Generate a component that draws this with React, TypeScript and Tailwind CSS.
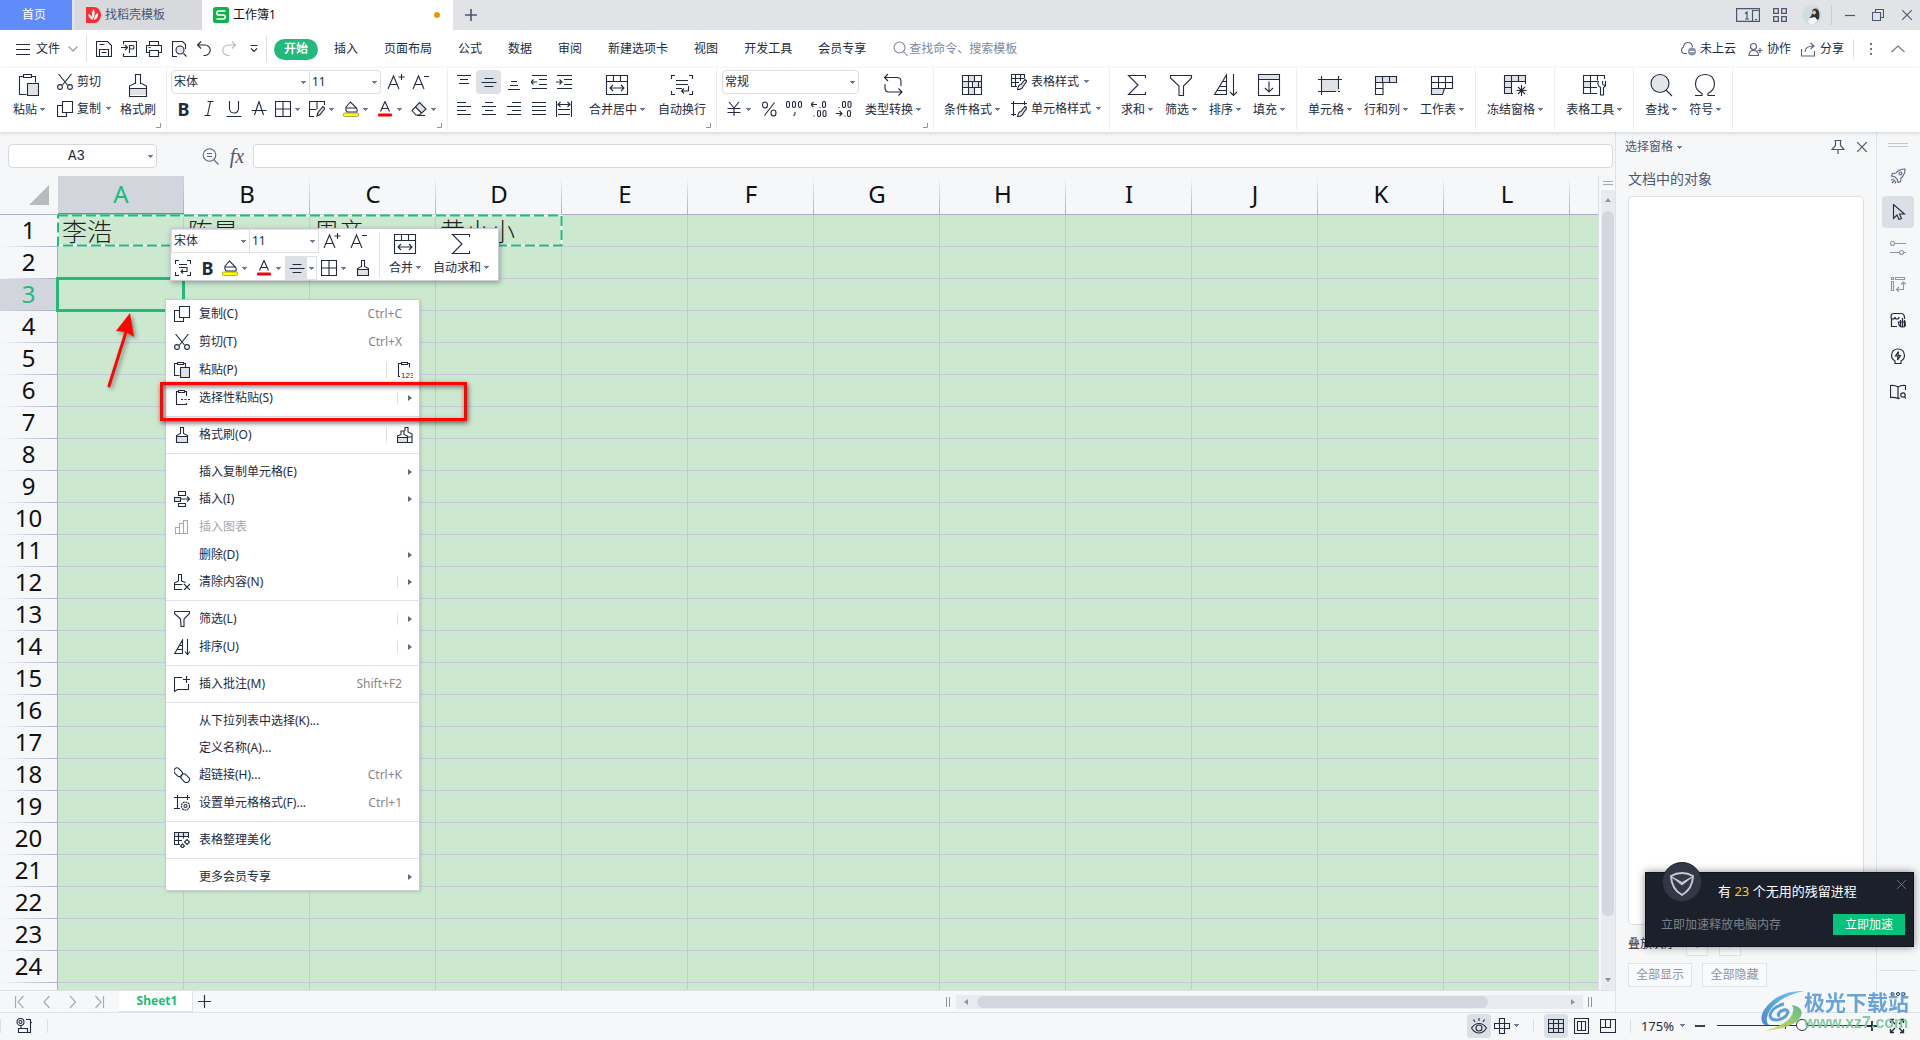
import React from "react";

type IconProps = { s?: number; d?: string; f?: string; sw?: number; className?: string; children?: React.ReactNode };

function Ic({ s = 16, d, f, sw = 1.1, className = "", children }: IconProps) {
  return (
    <svg width={s} height={s} viewBox={`0 0 ${s} ${s}`} fill="none" stroke="currentColor" strokeWidth={sw} className={`shrink-0 ${className}`} aria-hidden="true">
      {f && <path d={f} fill="#dfe1e4" stroke="none" />}
      {d && <path d={d} />}
      {children}
    </svg>
  );
}

const Caret = ({ className = "" }: { className?: string }) => (
  <svg width="5" height="3" viewBox="0 0 5 3" className={`shrink-0 ${className}`} fill="#707a90" aria-hidden="true">
    <path d="M0 0h5v1H0zM1 1h3v1H1zM2 2h1v1H2z" />
  </svg>
);

const Arrow = () => (
  <svg width="4" height="6" viewBox="0 0 4 6" fill="#5f6b85" aria-hidden="true">
    <path d="M0 0v6l4-3z" />
  </svg>
);

/* ---------- shared icons ---------- */
const CopyI = () => <Ic d="M5.5.5h10v11h-10zM5.500 4.500h-5v11h9v-4" />;
const CutI = () => (
  <Ic d="M1.500 0l9 11M14.500 0l-9 11">
    <circle cx="3" cy="13" r="2.400" />
    <circle cx="13" cy="13" r="2.400" />
  </Ic>
);
const PasteSmall = () => <Ic f="M7 6h8v9H7z" d="M5.500 13.500h-5v-12h3M9.500 1.500h2v4M3.500.5h6v2h-6zM6.500 5.500h9v10h-9z" />;
const BrushSmall = () => <Ic f="M3 10h11v5H3z" d="M2.500 15.500v-7l4-2v-6h3v6l4 2v7zM2.500 9.500h11" />;
const FunnelSmall = () => <Ic d="M.5.5h15v2l-5.500 5.500v7.500H7L6.500 8 .5 2.500z" />;
const SortSmall = () => <Ic d="M.7 14.500L8.500 1v13.500zM5.500 6.500h3M3 10.500h5.500M13.500 0v15M11 12.500l2.500 3 2.500-3" />;
const WrapSmall = () => <Ic d="M.5 4V.5H4M12 .5h3.500V4M.5 12v3.500H4M12 15.500h3.500V12M4 4.500h8M4 7.500h8v4H6M8 9.500l-2 2 2 2" />;
const BorderI = () => <Ic d="M.5.5h15v15H.5zM8 .5v15M.5 8h15" />;
const AlignMid = () => <Ic d="M3.500 4.500h9M.5 8.500h15M3.500 12.500h9" />;
const FillI = () => (
  <Ic d="M3 6l4.500-5 6 6c1 2 1 3 .5 4H4c-1.500-1.500-1.500-3-1-5zM3 7h10.500">
    <rect x="0.500" y="12" width="15" height="3.500" fill="#ff0" stroke="#7a7a2a" strokeWidth="0.600" rx="1" />
  </Ic>
);
const FontColorI = () => (
  <Ic d="M3.500 10.500L8 .5l4.500 10M5 7.500h6">
    <rect x="1" y="12.500" width="14" height="3" fill="#f00" stroke="none" rx="1" />
  </Ic>
);
const MergeBig = () => <Ic s={24} d="M1.500 2.500h21v19h-21zM1.500 8.500h21M8.500 2.500v6M15.500 2.500v6M5 15h14M8 12l-3 3 3 3M16 12l3 3-3 3" />;
const SigmaBig = () => <Ic s={24} d="M20.500 5V2.500h-17L13 12l-9.500 9.500h17V19" />;
const FontUp = () => <Ic s={18} d="M1 16L6.500 3 12 16M3 11.500h7M14.500 1v6M11.500 4h6" />;
const FontDown = () => <Ic s={18} d="M1 16L6.500 3 12 16M3 11.500h7M12 3.500h5" />;

/* ---------- ribbon parts ---------- */
function Big({ icon, label, caret = true }: { icon: React.ReactNode; label: string; caret?: boolean }) {
  return (
    <button className="flex shrink-0 flex-col items-center pt-[5px] text-xs leading-4">
      <span className="flex h-6 items-center">{icon}</span>
      <span className="mt-[5px] flex items-center gap-[3px] whitespace-nowrap">
        {label}
        {caret && <Caret className="mb-[2px]" />}
      </span>
    </button>
  );
}

function Small({ icon, label, caret }: { icon: React.ReactNode; label: string; caret?: boolean }) {
  return (
    <button className="flex h-[27px] items-center gap-1 whitespace-nowrap text-xs">
      {icon}
      {label}
      {caret && <Caret className="ml-px" />}
    </button>
  );
}

function Group({ children, className = "", launcher }: { children: React.ReactNode; className?: string; launcher?: boolean }) {
  return (
    <div className={`relative flex h-[62px] shrink-0 border-r border-[#eceef0] ${className}`}>
      {children}
      {launcher && (
        <svg width="5" height="5" className="absolute right-[5px] bottom-[2px]" fill="none" stroke="#8b94ab" aria-hidden="true">
          <path d="M4.500 0v4.500H0" />
        </svg>
      )}
    </div>
  );
}

const Tool = ({ label, children, active }: { label: string; children: React.ReactNode; active?: boolean }) => (
  <button aria-label={label} className={`flex h-6 w-[25px] items-center justify-center rounded-sm ${active ? "bg-[#dde1e6]" : ""}`}>
    {children}
  </button>
);

const Split = ({ label, children }: { label: string; children: React.ReactNode }) => (
  <button aria-label={label} className="flex h-6 w-[34px] items-center gap-1 pl-1">
    {children}
    <Caret />
  </button>
);

function Drop({ label, value, className = "" }: { label: string; value: string; className?: string }) {
  return (
    <label className={`relative flex h-6 items-center border border-[#dcdee2] bg-white ${className}`}>
      <select aria-label={label} className="h-full w-full appearance-none bg-transparent px-[2px] text-xs outline-none">
        <option>{value}</option>
      </select>
      <Caret className="absolute right-[3px]" />
    </label>
  );
}

const lines = (l: [number, number, number][]) => l.map(([x, y, w]) => `M${x} ${y}h${w}`).join("");

const tabs = ["插入", "页面布局", "公式", "数据", "审阅", "新建选项卡", "视图", "开发工具", "会员专享"];

function TitleBar() {
  return (
    <header className="flex h-[30px] shrink-0 items-center bg-[#e1e3e7] text-xs text-[#4c5672]">
      <button className="h-full w-[72px] bg-[#5f8bfb] pr-1 text-white">首页</button>
      <button className="ml-[3px] flex h-full w-[127px] items-center gap-1 bg-[#d8d9dd] pl-[11px]">
        <svg width="15" height="16" viewBox="0 0 15 16" aria-hidden="true">
          <path d="M0 0h8a7 8 0 010 16H0z" fill="#fb2c36" />
          <path d="M7 13C3 11 2 9 2.500 7 5 8 6 9 7 13zM7 12C5 7 6 4 8 2c1 4 1 7-1 10zM8 13c0-4 2-6 4-7 0 4-1 6-4 7z" fill="#fff" />
        </svg>
        找稻壳模板
      </button>
      <button className="flex h-full w-[251px] items-center gap-1 bg-white pl-[11px] text-[#111]">
        <svg width="16" height="16" viewBox="0 0 16 16" fill="none" aria-hidden="true">
          <rect width="16" height="16" rx="2.500" fill="#12b24b" />
          <path d="M12.500 4H5.500Q3.800 4 3.800 6T5.500 8h5Q12.200 8 12.200 10T10.500 12h-7" stroke="#fff" strokeWidth="1.600" />
        </svg>
        工作簿1
        <span className="mr-[13px] ml-auto size-[6px] rounded-full bg-[#e99b06]" />
      </button>
      <button aria-label="新建标签" className="ml-3">
        <Ic s={12} sw={1.600} d="M6 0v12M0 6h12" />
      </button>
      <div className="ml-auto flex items-center pr-2">
        <button aria-label="窗口">
          <svg width="24" height="14" viewBox="0 0 24 14" fill="none" stroke="currentColor" strokeWidth="1.200" aria-hidden="true">
            <path d="M.6.6h22.800v12.800H.6zM16.500 13V2.500h6M19 11.500h2M9 5.500l2-1.500v7M9 11h4" />
          </svg>
        </button>
        <button aria-label="应用" className="ml-[13px]">
          <Ic s={14} sw={1.300} d="M.7.7h4.600v4.600H.7zM8.700.7h4.600v4.600H8.700zM.7 8.700h4.600v4.600H.7zM8.700 8.700h4.600v4.600H8.700z" />
        </button>
        <button aria-label="账户" className="ml-[15px]">
          <svg width="20" height="20" viewBox="0 0 20 20" aria-hidden="true">
            <circle cx="10" cy="10" r="10" fill="#cfdde1" />
            <path d="M10 7c0-4 6-5 7 0 1 4 0 7-1 8l-3-2-6 0c2-1 3-3 3-6z" fill="#352f38" />
            <circle cx="12" cy="7.500" r="2" fill="#e8bda9" />
            <path d="M8 13l5-1 2 3-3 4.500-4 0-2-3z" fill="#f2f5f6" />
            <path d="M13 4l2-1.500 1 2z" fill="#d9a948" />
          </svg>
        </button>
        <span className="ml-[9px] h-5 w-px bg-[#c9ccd2]" />
        <button aria-label="最小化" className="ml-[13px]"><Ic s={10} sw={1.200} d="M0 5.500h10" /></button>
        <button aria-label="还原" className="ml-[17px]"><Ic s={12} d="M.5 3.500h8v8h-8zM3.500 3.500v-3h8v8h-3" /></button>
        <button aria-label="关闭" className="ml-[18px]"><Ic s={10} d="M0 0l10 10M10 0L0 10" /></button>
      </div>
    </header>
  );
}

function MenuBar() {
  return (
    <nav className="flex h-[38px] shrink-0 items-center bg-white text-xs whitespace-nowrap">
      <button className="ml-4 flex items-center gap-[6px]">
        <Ic s={14} d="M0 2.500h14M0 7.500h14M0 12.500h14" />
        文件
        <Ic s={10} className="ml-[2px] text-[#8d93a1]" d="M.5 2.500L5 7l4.500-4.500" />
      </button>
      <span className="ml-2 h-[26px] w-px bg-[#dcdfe4]" />
      <div className="ml-[9px] flex items-center gap-[9px]">
        <button aria-label="保存"><Ic d="M.5.5h11l4 4v11H.5zM3.500 15V8.500h9V15M3.500 3.500h5M5.500 11.500h5" /></button>
        <button aria-label="输出为PDF"><Ic d="M2.500 3.500v-3h13v15h-13v-3M0 6.500h6M4 4l2.500 2.500L4 9M8.500 12V4.500h3q1.500 0 1.500 1.800T11.500 8H8.500" /></button>
        <button aria-label="打印"><Ic d="M3.500 4.500v-4h9v4M3.500 11.500h-3v-7h15v7h-3M3.500 9.500h9v6h-9zM2.500 6.500h2" /></button>
        <button aria-label="打印预览">
          <Ic d="M6 15.500H1.500V.5h10l3 3V8M12.500 12.500l3 3">
            <circle cx="9" cy="9" r="4" fill="#e3e5e8" />
          </Ic>
        </button>
        <button aria-label="撤销"><Ic d="M5 .5L1.500 4 5 7.500M1.500 4H9a5.200 5.200 0 010 10.500H7.500" /></button>
        <button aria-label="恢复" className="text-[#b4b7bd]"><Ic d="M11 .5L14.500 4 11 7.500M14.500 4H7a5.200 5.200 0 000 10.500h1.500" /></button>
        <button aria-label="更多" className="ml-1"><Ic s={8} d="M.5.5h7M1 3.500L4 6.500l3-3" /></button>
      </div>
      <span className="ml-2 h-[26px] w-px bg-[#dcdfe4]" />
      <button className="ml-[7px] h-[21px] w-11 rounded-full bg-[#21b97c] font-bold text-white">开始</button>
      <div className="ml-4 flex items-center gap-[26px]">
        {tabs.map((t) => (
          <button key={t}>{t}</button>
        ))}
      </div>
      <label className="ml-[27px] flex items-center text-[#7d879f]">
        <Ic d="M10.500 10.500L14.500 15">
          <circle cx="6.500" cy="6.500" r="5.500" />
        </Ic>
        <input aria-label="搜索" placeholder="查找命令、搜索模板" className="w-36 outline-none placeholder:text-[#7d879f]" />
      </label>
      <div className="ml-auto flex items-center">
        <button className="flex items-center gap-1">
          <Ic className="text-[#56607a]" d="M7 12.500H4a3.500 3.500 0 01-.500-6.500Q4 1.500 8 1.500T12.500 6">
            <circle cx="12" cy="10.500" r="4" fill="#8b94ab" stroke="none" />
            <path d="M9.500 10.500h5" stroke="#fff" />
          </Ic>
          未上云
        </button>
        <button className="ml-3 flex items-center gap-1">
          <Ic s={15} className="text-[#56607a]" d="M1 13.500q0-5 4.500-5t5 5zM9.500 8.500h5M12 6v5">
            <circle cx="5.500" cy="4.500" r="3" />
          </Ic>
          协作
        </button>
        <button className="ml-[10px] flex items-center gap-1">
          <Ic s={15} className="text-[#56607a]" d="M.5 7v7h13V9M4 10q0-6 9-6M9.500 1L13 4l-3.500 3" />
          分享
        </button>
        <span className="ml-[9px] h-5 w-px bg-[#dcdfe4]" />
        <button aria-label="选项" className="ml-4">
          <svg width="3" height="12" fill="#6b7385" aria-hidden="true"><path d="M0 0h2v2H0zM0 5h2v2H0zM0 10h2v2H0z" /></svg>
        </button>
        <button aria-label="折叠功能区" className="mr-[15px] ml-[18px]"><Ic s={14} d="M.5 10L7 4l6.500 6" className="text-[#6b7385]" /></button>
      </div>
    </nav>
  );
}

function Ribbon() {
  return (
    <div className="relative z-10 flex h-16 shrink-0 bg-white shadow-[0_1px_4px_rgba(0,0,0,0.16)]">
      <Group className="w-[167px] pl-[13px]" launcher>
        <Big icon={<Ic s={24} f="M11 11h11v12H11z" d="M9.500 21.500h-7v-18h4M14.500 3.500h4v6M6.500 1.500h8v3h-8zM10.500 10.500h11v12h-11z" />} label="粘贴" />
        <div className="ml-3 flex flex-col">
          <Small icon={<CutI />} label="剪切" />
          <Small icon={<CopyI />} label="复制" caret />
        </div>
        <div className="ml-[9px]">
          <Big icon={<Ic s={24} f="M4 16h16v6H4z" d="M3.500 23.500V13l5-2.500h1v-9h5v9h1l5 2.500v10.500zM3.500 15.500h17" />} label="格式刷" caret={false} />
        </div>
      </Group>
      <Group className="w-[281px] flex-col pl-1" launcher>
        <div className="mt-[2px] flex items-center">
          <Drop label="字体" value="宋体" className="w-[139px] rounded-l-sm" />
          <Drop label="字号" value="11" className="w-[71px] rounded-r-sm border-l-0" />
          <button aria-label="增大字号" className="ml-[6px]"><FontUp /></button>
          <button aria-label="减小字号" className="ml-[7px]"><FontDown /></button>
        </div>
        <div className="mt-[3px] flex">
          <Tool label="加粗"><span className="text-lg leading-6 font-bold">B</span></Tool>
          <Tool label="倾斜"><Ic d="M6.500.5h6M3.500 14.500h6M9.500.5l-3 14" /></Tool>
          <Tool label="下划线"><Ic d="M3.500 0v7q0 5 4.500 5t4.500-5V0M.5 15.500h15" /></Tool>
          <Tool label="删除线"><Ic d="M3.500 14L8 .5l4.500 13.500M.5 9.500h15" /></Tool>
          <Split label="边框"><BorderI /></Split>
          <Split label="单元格样式"><Ic f="M7 13l6-7 3 2-6 7z" d="M5 15.500H.5V.5h15V4M.5 8.500h7M8 .5V8M8 15l1-3.500 5-6 2 2-5 6z" /></Split>
          <Split label="填充颜色"><FillI /></Split>
          <Split label="字体颜色"><FontColorI /></Split>
          <Split label="清除"><Ic f="M8.500 2L14 7.500 10 12 4 6.500z" d="M8.500 1.500L15 8l-6.500 6H5L1 9.500zM4.500 6l6 6M6 14.500h8" /></Split>
        </div>
      </Group>
      <Group className="w-[269px] pl-[3px]" launcher>
        <div className="flex flex-col">
          <div className="mt-[2px] flex">
            <Tool label="顶端对齐"><Ic d={lines([[1, 1.5, 14], [4, 5.5, 8], [3, 9.5, 10]])} /></Tool>
            <Tool label="垂直居中" active><AlignMid /></Tool>
            <Tool label="底端对齐"><Ic d={lines([[5, 7.5, 6], [4, 11.5, 8], [2, 15.5, 12]])} /></Tool>
            <Tool label="减少缩进"><Ic d="M1 1.500h15M8 5.500h8M8 10.500h8M1 14.500h15M6 8H0M2.500 5.500L0 8l2.500 2.500" /></Tool>
            <Tool label="增加缩进"><Ic d="M1 1.500h15M8 5.500h8M8 10.500h8M1 14.500h15M6 8H0M3.500 5.500L6 8l-2.500 2.500" /></Tool>
          </div>
          <div className="mt-[3px] flex">
            <Tool label="左对齐"><Ic d={lines([[1, 1.5, 9], [1, 5.5, 14], [1, 9.5, 9], [1, 13.5, 14]])} /></Tool>
            <Tool label="居中"><Ic d={lines([[4, 1.5, 8], [1, 5.5, 14], [4, 9.5, 8], [1, 13.5, 14]])} /></Tool>
            <Tool label="右对齐"><Ic d={lines([[6, 1.5, 9], [1, 5.5, 14], [6, 9.5, 9], [1, 13.5, 14]])} /></Tool>
            <Tool label="两端对齐"><Ic d={lines([[1, 1.5, 14], [1, 5.5, 14], [1, 9.5, 14], [1, 13.5, 14]])} /></Tool>
            <Tool label="分散对齐"><Ic d="M.5 0v16M15.500 0v16M2 8.500h12M2 13.500h12M2 3.500h12M4.500 1L2 3.500 4.500 6M11.500 1L14 3.500 11.500 6" /></Tool>
          </div>
        </div>
        <div className="ml-[13px] flex gap-[13px]">
          <Big icon={<MergeBig />} label="合并居中" />
          <Big icon={<Ic s={24} d="M1.500 6V2.500H5M19 2.500h3.500V6M1.500 18v3.500H5M19 21.500h3.500V18M6 7.500h12M6 11.500h12M6 15.500h6M18.500 13v5h-7M14 15.500L11.500 18l2.500 2.500" />} label="自动换行" caret={false} />
        </div>
      </Group>
      <Group className="w-[217px] pl-[5px]" launcher>
        <div className="flex flex-col">
          <Drop label="数字格式" value="常规" className="mt-[2px] w-[137px] rounded-sm" />
          <div className="mt-[3px] flex">
            <Split label="货币"><Ic d="M3 1l5 6 5-6M8 7v8M1.500 7.500h13M1.500 11.500h13" /></Split>
            <Tool label="百分比"><Ic d="M13.500 1.500l-10 13"><ellipse cx="4" cy="4" rx="2.500" ry="3" /><ellipse cx="12.500" cy="12" rx="2.500" ry="3" /></Ic></Tool>
            <Tool label="千位分隔"><Ic d="M9 11v2l-1.500 2"><rect x="0.500" y="0.500" width="3" height="6" rx="1.500" /><rect x="6.500" y="0.500" width="3" height="6" rx="1.500" /><rect x="12.500" y="0.500" width="3" height="6" rx="1.500" /></Ic></Tool>
            <Tool label="增加小数位"><Ic d="M0 3.500h6M2.500 1L0 3.500 2.500 6M9 6v1M3 14.500v1"><rect x="11.500" y="0.500" width="3" height="6" rx="1.500" /><rect x="6.500" y="9.500" width="3" height="6" rx="1.500" /><rect x="12" y="9.500" width="3" height="6" rx="1.500" /></Ic></Tool>
            <Tool label="减少小数位"><Ic d="M0 12.500h6M3.500 10L6 12.500 3.500 15M3 6v1M9 14.500v1"><rect x="6.500" y="0.500" width="3" height="6" rx="1.500" /><rect x="12" y="0.500" width="3" height="6" rx="1.500" /><rect x="11.500" y="9.500" width="3" height="6" rx="1.500" /></Ic></Tool>
          </div>
        </div>
        <div className="ml-[6px]">
          <Big icon={<Ic s={24} d="M7 1L3.500 4.500 7 8M4 4.500h12q4 0 4 4V13M4 11v4q0 4 4 4h13M17.500 15.500L21 19l-3.500 3.500" />} label="类型转换" />
        </div>
      </Group>
      <Group className="w-[176px] pl-[10px]">
        <Big icon={<Ic s={24} f="M8 3h6v7H8zM2 9h6v6H2zM14 9h8v6h-8zM8 15h6v6H8z" d="M2.500 2.500h19v19h-19zM2.500 8.500h19M2.500 14.500h19M8.500 2.500v19M14.500 2.500v6M18.500 8.500v6M14.500 14.500v7M12.500 8.500v6" />} label="条件格式" />
        <div className="ml-[11px] flex flex-col">
          <Small icon={<Ic f="M8 11l6-6 2 2-6 7z" d="M6 12.500H.5V.5h13V4M.5 4.500h13M.5 8.500H8M4.500.5v12M9.500.5V7M6.500 15.500q1-5 3.500-5l4-5 2 1.500-4 5.500q-1 3-5.500 3z" />} label="表格样式" caret />
          <Small icon={<Ic f="M8 11l6-6 2 2-6 7z" d="M0 2.500h16M2.500 0v15M0 13.500h5M13.500 0v4M6.500 15.500q1-5 3.500-5l4-5 2 1.500-4 5.500q-1 3-5.500 3z" />} label="单元格样式" caret />
        </div>
      </Group>
      <Group className="gap-3 px-[11px]">
        <Big icon={<SigmaBig />} label="求和" />
        <Big icon={<Ic s={24} d="M1.500 2.500h21V5L14.500 13v9.500h-4.500V13L1.500 5z" />} label="筛选" />
        <Big icon={<Ic s={24} d="M1.500 21.500L13.500 2v19.500zM10 8.500h3.500M6.500 13.500h7M4 17.500h9.500M20.500 1v21M17 19l3.500 3.500L24 19" />} label="排序" />
        <Big icon={<Ic s={24} f="M2 2h20v4H2z" d="M1.500 1.500h21v21h-21zM1.500 6.500h21M12 8.500v10M8 15l4 4 4-4" />} label="填充" />
      </Group>
      <Group className="gap-3 px-[11px]">
        <Big icon={<Ic s={24} f="M4 7h17v12H4z" d="M0 6.500h24M0 18.500h18M3.500 3v19M20.500 3v13M20 18.500h2" />} label="单元格" />
        <Big icon={<Ic s={24} f="M1 3h22v6H1z" d="M1.500 3.500h21v6H9v12H1.500zM1.500 9.500H9M1.500 15.500H9M8.500 3.500v6M15.500 3.500v6" />} label="行和列" />
        <Big icon={<Ic s={24} f="M1 16h13l-3 5H1z" d="M1.500 3.500h21v12h-21zM1.500 9.500h21M8.500 3.500v12M15.500 3.500v12M1.500 15.500v6h11l2-6" />} label="工作表" />
      </Group>
      <Group className="px-[11px]">
        <Big icon={<Ic s={24} f="M1 2h21v6H1zM1 8h7v13H1z" d="M22.500 11V2.500h-21v18H10M1.500 8.500h21M8.500 2.500v18M15.500 2.500v6M1.500 14.500h7M18.500 12v11M13.500 17.500h10M15 14l7 7M22 14l-7 7" />} label="冻结窗格" />
      </Group>
      <Group className="px-[11px]">
        <Big icon={<Ic s={24} f="M1 8h7v6H1z" d="M22.500 6V2.500h-21v18H15M1.500 8.500h14M1.500 14.500H15M8.500 2.500v18M15.500 2.500v5M16.500 8q-2 4 2 6.500v7.500h3v-7.500q4-2.500 2-6.500v4h-2q-1 0-1-4" />} label="表格工具" />
      </Group>
      <Group className="gap-3 px-[11px]">
        <Big icon={<Ic s={24} d="M17 17l6 6"><circle cx="11" cy="10.500" r="9" fill="#e3e5e8" /></Ic>} label="查找" />
        <Big icon={<Ic s={24} d="M2 22.500h7v-2Q2.500 17 2.500 11 3 1.500 12 1.500T21.500 11q0 6-6.500 9.500v2h7" />} label="符号" />
      </Group>
    </div>
  );
}

function FormulaBar() {
  return (
    <div className="flex h-11 shrink-0 items-center pt-1 pr-[2px] pl-2">
      <label className="relative flex h-6 w-[149px] items-center rounded-sm border border-[#d5d8dd] bg-white">
        <input aria-label="名称框" defaultValue="A3" className="w-full pr-3 text-center font-['Liberation_Mono',monospace] text-sm outline-none" />
        <Caret className="absolute right-[3px]" />
      </label>
      <button aria-label="缩放" className="ml-[45px] text-[#5b657d]">
        <Ic s={17} d="M12 12l4.500 4.500M5 5.500h5M5 8.500h5"><circle cx="7.500" cy="7" r="6.300" /></Ic>
      </button>
      <button aria-label="插入函数" className="ml-[10px] w-4 font-['Liberation_Serif',serif] text-xl leading-6 text-[#4c5672] italic">fx</button>
      <input aria-label="编辑栏" className="ml-2 h-6 flex-1 rounded-sm border border-[#d5d8dd] bg-white px-2 text-xs outline-none" />
    </div>
  );
}

const cols = ["A", "B", "C", "D", "E", "F", "G", "H", "I", "J", "K", "L", ""];
const names = ["李浩", "陈晨", "周彦", "黄小小"];

function Sheet() {
  return (
    <table className="w-[1696px] table-fixed border-separate border-spacing-0">
      <thead>
        <tr className="h-[39px] text-2xl leading-8 text-[#111]">
          <th className="w-[58px] border-b border-[#a9afc6] p-0">
            <svg width="20" height="20" className="ml-[29px]" fill="#b9babb" aria-hidden="true"><path d="M20 0v20H0z" /></svg>
          </th>
          {cols.map((c, i) => (
            <th
              key={i}
              className={`w-[126px] bg-[linear-gradient(transparent,#a9afc6)] bg-[length:1px_100%] bg-right bg-no-repeat p-0 pb-[2px] font-normal ${
                i === 0 ? "border-b-2 border-[#21b97c] bg-[#d2d5db] text-[#21b97c]" : "border-b border-[#a9afc6]"
              }`}
            >
              {c}
            </th>
          ))}
        </tr>
      </thead>
      <tbody>
        {Array.from({ length: 25 }, (_, r) => (
          <tr key={r} className="h-8">
            <th
              className={`border-r border-[#a9afc6] bg-[linear-gradient(to_right,transparent,#a9afc6)] bg-[length:100%_1px] bg-bottom bg-no-repeat p-0 pb-[3px] text-2xl leading-[28px] font-normal ${
                r === 2 ? "bg-[#d2d5db] text-[#21b97c]" : "text-[#111]"
              }`}
            >
              {r < 24 ? r + 1 : ""}
            </th>
            {cols.map((_c, i) => (
              <td key={i} className="border-r border-b border-[#c4c8dc] bg-[#cce8cf] p-0 pl-1 font-['Noto_Sans_CJK_SC',sans-serif] text-[25px] leading-[31px] font-light whitespace-nowrap text-[#222]">
                {r === 0 ? names[i] : ""}
              </td>
            ))}
          </tr>
        ))}
      </tbody>
    </table>
  );
}

function MiniBar() {
  return (
    <div role="toolbar" className="absolute top-[52px] left-[170px] flex h-[53px] border border-[#c9cdd3] bg-white shadow-[1px_2px_5px_rgba(0,0,0,0.3)]">
      <div className="flex flex-col">
        <div className="flex items-center">
          <Drop label="浮动字体" value="宋体" className="w-[79px]" />
          <Drop label="浮动字号" value="11" className="w-[69px] border-l-0" />
          <button aria-label="增大" className="ml-1"><FontUp /></button>
          <button aria-label="减小" className="ml-[9px]"><FontDown /></button>
        </div>
        <div className="mt-[3px] flex items-center">
          <button aria-label="自动换行" className="ml-1"><WrapSmall /></button>
          <button aria-label="加粗" className="ml-[6px] w-[21px] text-lg leading-6 font-bold">B</button>
          <Split label="填充"><FillI /></Split>
          <button aria-label="颜色" className="flex h-6 w-[33px] items-center gap-1 pl-1"><FontColorI /><Caret /></button>
          <button aria-label="对齐" className="flex h-6 w-8 items-center justify-between bg-[#dde1e6] pl-1">
            <AlignMid />
            <span className="mr-px flex h-[22px] w-[9px] items-center justify-center bg-white"><Caret /></span>
          </button>
          <Split label="框线"><BorderI /></Split>
          <button aria-label="格式刷" className="ml-1"><BrushSmall /></button>
        </div>
      </div>
      <div className="my-[3px] ml-2 w-px bg-[#e1e3e6]" />
      <div className="ml-[9px] flex gap-3 pr-[9px]">
        {[
          { i: <MergeBig />, l: "合并" },
          { i: <SigmaBig />, l: "自动求和" },
        ].map(({ i, l }) => (
          <button key={l} className="flex flex-col items-center pt-[3px] text-xs leading-4">
            {i}
            <span className="mt-1 flex items-center gap-[3px]">{l}<Caret className="mb-[2px]" /></span>
          </button>
        ))}
      </div>
    </div>
  );
}

type Item = { l?: string; k?: string; icon?: React.ReactNode; sub?: boolean; bar?: boolean; extra?: React.ReactNode; off?: boolean };
const menu: Item[] = [
  { l: "复制(C)", k: "Ctrl+C", icon: <CopyI /> },
  { l: "剪切(T)", k: "Ctrl+X", icon: <CutI /> },
  {
    l: "粘贴(P)",
    icon: <PasteSmall />,
    extra: (
      <Ic d="M3 14.500H1.500v-13h3M10.500 1.500h2v4M4.500.5h6v2h-6z">
        <text x="4" y="15.500" fontSize="8" fontFamily="Liberation Sans, sans-serif" fill="currentColor" stroke="none">123</text>
      </Ic>
    ),
  },
  { l: "选择性粘贴(S)", icon: <Ic d="M12.500 6V1.500h-2M4.500 1.500h-2v13h10V13M4.500.5h6v2h-6zM7 9.500h2M10.500 9.500h2M14 9.500h2" />, sub: true, bar: true },
  {},
  { l: "格式刷(O)", icon: <BrushSmall />, extra: <Ic f="M1 11h9v4H1z" d="M.5 15.500V9L4 7.500V4h3v3.500L10.500 9v6.500zM.5 10.500h10M8 4V.5h3V5l4 2v8.500h-4M10.500 10h5" /> },
  {},
  { l: "插入复制单元格(E)", sub: true },
  { l: "插入(I)", icon: <Ic f="M1 7h6v4H1z" d="M4.500.5h7v4h-7zM.5 6.500h6v4h-6zM4.500 12.500h7v3h-7zM7 8h8.500M13 5.500L15.500 8 13 10.500" />, sub: true },
  { l: "插入图表", icon: <Ic d="M1.500 8.500h4v6h-4zM5.500 4.500h4v10h-4zM9.500 1.500h4v13h-4z" />, off: true },
  { l: "删除(D)", sub: true },
  { l: "清除内容(N)", icon: <Ic d="M8 15.500H.5V9L4.500 7V.5h3V7l4 1.500M.5 10.500h8M10 10l6 6M16 10l-6 6" />, sub: true, bar: true },
  {},
  { l: "筛选(L)", icon: <FunnelSmall />, sub: true, bar: true },
  { l: "排序(U)", icon: <SortSmall />, sub: true, bar: true },
  {},
  { l: "插入批注(M)", k: "Shift+F2", icon: <Ic d="M8 1.500H.5v14l3-2h11V8M12.500 0v7M9 3.500h7" /> },
  {},
  { l: "从下拉列表中选择(K)..." },
  { l: "定义名称(A)..." },
  {
    l: "超链接(H)...",
    k: "Ctrl+K",
    icon: (
      <Ic>
        <rect x="-0.500" y="2" width="9.500" height="6" rx="3" transform="rotate(45 4 5)" />
        <rect x="6.500" y="8" width="9.500" height="6" rx="3" transform="rotate(45 11 11)" />
      </Ic>
    ),
  },
  {
    l: "设置单元格格式(F)...",
    k: "Ctrl+1",
    icon: (
      <Ic d="M0 2.500h16M3.500 0v14M0 13.500h6M13.500 0v5">
        <circle cx="11.500" cy="11" r="4" strokeDasharray="2 0.600" />
        <circle cx="11.500" cy="11" r="1.500" />
      </Ic>
    ),
  },
  {},
  { l: "表格整理美化", icon: <Ic f="M1 1h13v4H1z" d="M14.500 6V.5H.5v12H6M.5 4.500h14M.5 8.500H8M4.500.5v12M9.500.5v6M13 7.500l2.500 2.500-2.500 2.500-2.500-2.500zM8.500 12l2 2-2 2-2-2z" /> },
  {},
  { l: "更多会员专享", sub: true },
];

function ContextMenu() {
  return (
    <div role="menu" className="absolute top-[123px] left-[165px] w-[255px] border border-[#c5cfd2] bg-white text-xs shadow-[1px_1px_3px_rgba(0,0,0,0.15)]">
      {menu.map((m, i) =>
        m.l ? (
          <button key={i} role="menuitem" className={`flex w-full items-center pl-2 ${m.icon ? "h-7" : "h-[27px]"} ${m.off ? "text-[#a7a9ad]" : ""}`}>
            <span className="mr-[9px] flex w-4 shrink-0">{m.icon}</span>
            {m.l}
            {m.k && <span className="mr-[17px] ml-auto text-[#84878c]">{m.k}</span>}
            {m.extra && <span className="mr-[6px] ml-auto flex h-4 border-l border-[#dcdfe4] pl-[10px]">{m.extra}</span>}
            {m.sub && <span className={`mr-[7px] ml-auto flex h-3 items-center pl-[10px] ${m.bar ? "border-l border-[#dcdfe4]" : ""}`}><Arrow /></span>}
          </button>
        ) : (
          <hr key={i} className="my-1 h-px border-0 bg-[#dfe2e6]" />
        )
      )}
    </div>
  );
}

function GridArea() {
  return (
    <div className="flex min-h-0 flex-1">
      <div className="relative flex-1 overflow-hidden bg-[#f5f7f9]">
        <Sheet />
        <svg width="506" height="34" viewBox="0 0 506 34" className="absolute top-[38px] left-[57px]" fill="none" aria-hidden="true">
          <rect x="1" y="1.500" width="503.500" height="30" stroke="#eefaf0" strokeWidth="2" />
          <rect x="1" y="1.500" width="503.500" height="30" stroke="#21b97c" strokeWidth="2" strokeDasharray="10 4" />
        </svg>
        <div className="absolute top-[101px] left-[56px] h-[35px] w-[129px] border-[3px] border-[#21b97c]" />
        <MiniBar />
        <ContextMenu />
        <div className="absolute top-[206px] left-[160px] h-[39px] w-[307px] border-[3px] border-[#fb0505] shadow-[1px_2px_5px_rgba(0,0,0,0.6),inset_1px_2px_5px_rgba(0,0,0,0.5)]" />
        <svg width="40" height="84" viewBox="0 0 40 84" className="absolute top-[132px] left-[104px] drop-shadow-[2px_2px_2px_rgba(0,0,0,0.4)]" aria-hidden="true">
          <path d="M5 78L22 24" stroke="#fb0505" strokeWidth="3" strokeLinecap="round" />
          <path d="M26 5l4 24-8-5-10-1z" fill="#fb0505" />
        </svg>
      </div>
      <div className="flex w-[17px] shrink-0 flex-col border-l border-[#dcdfe5] pl-[2px]">
        <svg width="14" height="14" className="shrink-0 text-[#a3a9b8]" stroke="currentColor" aria-hidden="true"><path d="M2 5.500h10M2 8.500h10" /></svg>
        <div className="flex flex-1 flex-col items-center bg-[#e9ebf0] py-2">
          <svg width="6" height="4" fill="#8b94ab" aria-hidden="true"><path d="M0 4h6L3 0z" /></svg>
          <div className="mt-[9px] mb-[62px] w-3 flex-1 rounded-full bg-[#d4d7df]" />
          <svg width="6" height="4" fill="#8b94ab" aria-hidden="true"><path d="M0 0h6L3 4z" /></svg>
        </div>
      </div>
    </div>
  );
}

const Handle = ({ className = "" }: { className?: string }) => (
  <svg width="4" height="10" className={className} stroke="#8b94ab" aria-hidden="true"><path d="M.5 0v10M3.500 0v10" /></svg>
);

function SheetBar() {
  return (
    <div className="flex h-[22px] shrink-0 items-center border-t border-[#dfe2e7] pl-2 text-[#a8abb2]">
      {[
        ["第一张", "M1.500 1v12M9.500 1L4 7l5.500 6"],
        ["上一张", "M9.500 1L4 7l5.500 6"],
        ["下一张", "M4 1l5.500 6L4 13"],
        ["最后一张", "M3.500 1L9 7l-5.500 6M11.500 1v12"],
      ].map(([l, d]) => (
        <button key={l} aria-label={l} className="flex w-[26px] justify-center"><Ic s={14} sw={1.200} d={d} /></button>
      ))}
      <button className="ml-[7px] h-full w-[74px] border-r border-b border-[#dfe2e7] bg-white pl-[3px] text-xs leading-5 font-bold text-[#21b97c]">Sheet1</button>
      <button aria-label="新建工作表" className="ml-[5px] text-[#2c3547]"><Ic s={13} sw={1.200} d="M6.500 0v13M0 6.500h13" /></button>
      <div className="ml-auto flex w-[669px] items-center pr-[23px]">
        <Handle />
        <div className="ml-[6px] flex h-[14px] flex-1 items-center bg-[#e9ebf0] px-2">
          <svg width="4" height="6" fill="#8b94ab" aria-hidden="true"><path d="M4 0v6L0 3z" /></svg>
          <div className="mr-[83px] ml-[9px] h-3 flex-1 rounded-full bg-[#d4d7df]" />
          <svg width="4" height="6" fill="#8b94ab" aria-hidden="true"><path d="M0 0v6l4-3z" /></svg>
        </div>
        <Handle className="ml-[5px]" />
      </div>
    </div>
  );
}

function Panel() {
  const btn = "border border-[#e0e3e8] bg-[#f9fafb] text-[#8b94ab]";
  return (
    <aside className="flex w-[261px] shrink-0 flex-col border-l border-[#dfe2e7] px-3 pb-[25px] text-[#4c5672]">
      <div className="-ml-[3px] flex h-[30px] items-center text-xs">
        <button className="flex items-center gap-1">选择窗格<Caret /></button>
        <button aria-label="固定" className="ml-auto"><Ic s={14} sw={1.200} d="M3.500.5h7M4.500.5v5L1 9.500h12l-3.500-4v-5M7 9.500V14" /></button>
        <button aria-label="关闭窗格" className="mr-[-3px] ml-3"><Ic s={10} sw={1.200} d="M0 0l10 10M10 0L0 10" /></button>
      </div>
      <h2 className="flex h-[34px] items-center text-sm">文档中的对象</h2>
      <div className="flex-1 rounded-sm border border-[#dcdfe4] bg-white" />
      <div className="flex h-[38px] items-center text-xs text-[#2c3547]">
        叠放次序
        <button aria-label="上移" className={`ml-[10px] flex h-[23px] w-[22px] items-center justify-center ${btn}`}><Ic s={8} d="M4 8V1M1 4l3-3 3 3" /></button>
        <button aria-label="下移" className={`ml-[11px] flex h-[23px] w-[22px] items-center justify-center ${btn}`}><Ic s={8} d="M4 0v7M1 4l3 3 3-3" /></button>
      </div>
      <div className="flex gap-[10px] text-xs">
        <button className={`h-6 w-16 ${btn}`}>全部显示</button>
        <button className={`h-6 w-[65px] ${btn}`}>全部隐藏</button>
      </div>
    </aside>
  );
}

function SideBar() {
  const slot = "mb-1 flex size-8 shrink-0 items-center justify-center rounded-sm";
  return (
    <aside className="flex w-11 shrink-0 flex-col items-center border-l border-[#dfe2e7] pr-[2px] pb-[15px]">
      <svg width="20" height="4" className="mt-[11px] mb-[13px] shrink-0" stroke="#c4c7cd" aria-hidden="true"><path d="M0 .5h20M0 3.500h20" /></svg>
      <button aria-label="快速" className={`${slot} text-[#5b6785]`}>
        <Ic d="M15 1Q9 1 6 5L2.500 5.500 1.500 8l3 .5 3 3 .5 3 2.500-1L11 10q4-3 4-9zM4 11l-3 1M5 12l-3 3M6 13l-1 2.500"><circle cx="10.500" cy="5.500" r="1.500" /></Ic>
      </button>
      <button aria-label="选择" className={`${slot} bg-[#dbdfe6]`}><Ic d="M3.500.5v14l3.500-3.500 2 4.500 2.500-1-2-4.500h5z" /></button>
      <button aria-label="属性" className={`${slot} text-[#9097a8]`}>
        <Ic d="M5 3.500h11M0 12.500h9M14 12.500h2"><circle cx="2.500" cy="3.500" r="2" /><circle cx="11.500" cy="12.500" r="2" /></Ic>
      </button>
      <button aria-label="透视" className={`${slot} text-[#9097a8]`}><Ic d="M1.500 1.500h2v2h-2zM5.500 1.500h9v2h-9zM1.500 5.500h2v9h-2zM7 13.500h6.500V6M9 11l-2.500 2.500L9 16M11 8.500L13.500 6 16 8.500" /></button>
      <button aria-label="工具箱" className={slot}><Ic sw={1.200} d="M1 5q0-3.500 3-3.500h7q3 0 3.500 3.500v2M1 5q0 2 2 2t2-2q0 2 2 2t2-2M1.500 7v7.500H7M8.500 10q0 5 4 5t3.500-5H8.500zM12.500 6v9M10.500 8v6M14.500 8v6" /></button>
      <button aria-label="灵感" className={slot}><Ic sw={1.200} d="M5 13Q1.500 11 1.500 7.500 2 1 8 1t6.500 6.500Q14.500 11 11 13v2.500H5zM8.500 3.500L5.500 8H8l-.5 4 3-4.500H8z" /></button>
      <button aria-label="帮助" className={slot}><Ic sw={1.200} d="M8 3Q5 1 .5 1.500v12Q5 13 8 14.500V3q3-2 7.500-1.500V6M8 14.500l2-.5M14.500 13l1.500 1.500"><circle cx="13" cy="11" r="2.200" /></Ic></button>
      <div className="mt-auto mb-5 h-px w-[38px] shrink-0 bg-[#dcdfe4]" />
      <button aria-label="更多"><svg width="16" height="6" fill="none" stroke="currentColor" aria-hidden="true"><circle cx="2.500" cy="3" r="1.500" /><circle cx="8" cy="3" r="1.500" /><circle cx="13.500" cy="3" r="1.500" /></svg></button>
    </aside>
  );
}

function StatusBar() {
  const sel = "flex h-6 w-6 items-center justify-center rounded-sm";
  return (
    <footer className="flex h-7 shrink-0 items-center border-t border-[#dfe2e7] pb-[2px]">
      <span className="h-[14px] w-px bg-[#dcdfe4]" />
      <button aria-label="宏" className="ml-[15px]">
        <Ic d="M10 1.500h4.500v13H2.500v-4h9v4M14.500 1.500v3h2M5 8v2"><circle cx="4.500" cy="4" r="3.500" /><circle cx="4.500" cy="4" r="1.500" /></Ic>
      </button>
      <span className="ml-[15px] h-[14px] w-px bg-[#dcdfe4]" />
      <div className="ml-auto flex items-center pr-[15px]">
        <button aria-label="护眼模式" className={`${sel} bg-[#dbdfe6]`}>
          <Ic d="M.5 10q3-4.500 7.500-4.500t7.500 4.500Q12.500 15 8 15T.5 10zM8 0v3M2.500 1.500l1.500 2.500M13.500 1.500L12 4"><circle cx="8" cy="10" r="3" /></Ic>
        </button>
        <button aria-label="阅读模式" className="ml-[3px] flex items-center gap-1"><Ic d="M5.500.5h5v15h-5zM.5 5.500h15v5H.5z" /><Caret /></button>
        <span className="ml-[14px] h-[14px] w-px bg-[#dcdfe4]" />
        <button aria-label="普通视图" className={`${sel} ml-[10px] bg-[#dbdfe6]`}><Ic d="M.5 1.500h15v13H.5zM.5 5.500h15M.5 10.500h15M5.500 1.500v13M10.500 1.500v13" /></button>
        <button aria-label="页面布局视图" className={`${sel} ml-[2px]`}><Ic d="M.5.5h14v15H.5zM3.500 3.500h8v9h-8zM7.500 3.500v9" /></button>
        <button aria-label="分页预览" className={`${sel} ml-[2px]`}><Ic d="M.5 1.500h15v13H.5zM.5 9.500h10v-8M5.500 1.500v8" /></button>
        <span className="ml-[10px] h-[14px] w-px bg-[#dcdfe4]" />
        <button className="ml-[10px] flex items-center gap-[6px] text-[13px] leading-5">175%<Caret /></button>
        <button aria-label="缩小" className="ml-[10px]"><Ic s={10} sw={1.800} d="M0 5h10" /></button>
        <label className="relative ml-3 flex w-[150px] items-center">
          <input
            type="range"
            aria-label="显示比例"
            defaultValue={57}
            className="h-3 w-full appearance-none bg-transparent [&::-webkit-slider-runnable-track]:h-px [&::-webkit-slider-runnable-track]:bg-[#2c3547] [&::-webkit-slider-thumb]:mt-[-6px] [&::-webkit-slider-thumb]:size-3 [&::-webkit-slider-thumb]:appearance-none [&::-webkit-slider-thumb]:rounded-full [&::-webkit-slider-thumb]:border [&::-webkit-slider-thumb]:border-[#2c3547] [&::-webkit-slider-thumb]:bg-white"
          />
          <span className="absolute left-[68px] h-[6px] w-px bg-[#2c3547]" />
        </label>
        <button aria-label="放大"><Ic s={10} sw={1.800} d="M0 5h10M5 0v10" /></button>
        <button aria-label="全屏" className="ml-3"><Ic sw={1.300} d="M1.500 5V1.500H5M11 1.500h3.500V5M1.500 11v3.500H5M11 14.500h3.500V11M1.500 1.500L6 6M14.500 1.500L10 6M1.500 14.500L6 10M14.500 14.500L10 10" /></button>
      </div>
    </footer>
  );
}

function Toast() {
  return (
    <div role="alert" className="absolute right-[6px] bottom-[93px] z-20 flex h-[75px] w-[269px] flex-col border border-[#10131b] bg-[#1c202b] pr-2 pl-[15px] shadow-[0_0_8px_rgba(0,0,0,0.45)]">
      <svg width="40" height="40" viewBox="0 0 40 40" className="absolute top-[-11px] left-4" fill="none" aria-hidden="true">
        <circle cx="20" cy="20" r="19.500" fill="#323845" stroke="#20242e" />
        <path d="M20 11q6 0 11 3-.5 13-11 19Q9.500 27 9 14q5-3 11-3z" stroke="#c4c9d4" strokeWidth="2" />
        <path d="M10 15L20 23l10-8L20 20.500z" stroke="#c4c9d4" fill="#c4c9d4" />
      </svg>
      <p className="mt-2 ml-[57px] text-[13px] leading-5 whitespace-pre text-white">
        有 <span className="text-[#f5d320]">23</span> 个无用的残留进程
      </p>
      <button aria-label="关闭提示" className="absolute top-[7px] right-[7px] text-[#7b808c]"><Ic s={9} sw={0.800} d="M0 0l9 9M9 0L0 9" /></button>
      <div className="mt-[13px] flex items-center justify-between text-xs text-[#7b808c]">
        立即加速释放电脑内存
        <button className="h-[21px] w-[72px] bg-[#06c27b] text-white">立即加速</button>
      </div>
    </div>
  );
}

function Brand() {
  return (
    <div className="pointer-events-none absolute right-[11px] bottom-2 z-20 flex items-center opacity-90">
      <svg width="46" height="42" viewBox="0 0 46 42" fill="none" aria-hidden="true">
        <defs>
          <linearGradient id="blue" x1="0" y1="1" x2="1" y2="0"><stop stopColor="#3f7cc4" /><stop offset="1" stopColor="#5cc3ee" /></linearGradient>
          <linearGradient id="green" x1="0" y1="1" x2="1" y2="0"><stop stopColor="#e3e04c" /><stop offset="1" stopColor="#4bb37c" /></linearGradient>
        </defs>
        <path d="M44 1Q26 0 12 11-1 22 2 32q2 4 7 3Q4 30 10 20 20 6 44 1z" fill="url(#blue)" />
        <path d="M32 15q12 2 9 11-5 12-37 15 16-4 24-11 8-8 4-15z" fill="url(#green)" />
        <path d="M24 14q-12 3-14 11 0 5 7 5 10-2 11-8-1-4-7-1-5 4-1 5" stroke="#4c95d4" strokeWidth="3" />
      </svg>
      <div className="-ml-[2px] flex flex-col">
        <span className="text-[21px] leading-6 font-bold text-[#5c9ad6]">极光下载站</span>
        <span className="font-['Liberation_Sans',sans-serif] text-base leading-[18px] font-bold text-[#7cc79d]">www.xz7.com</span>
      </div>
    </div>
  );
}

export default function App() {
  return (
    <div className="relative flex h-screen w-full flex-col overflow-hidden bg-[#f5f7f9] font-['Noto_Sans','Noto_Sans_CJK_SC',sans-serif] text-[#222b3d]">
      <TitleBar />
      <MenuBar />
      <Ribbon />
      <div className="flex min-h-0 flex-1">
        <main className="flex min-w-0 flex-1 flex-col">
          <FormulaBar />
          <GridArea />
          <SheetBar />
        </main>
        <Panel />
        <SideBar />
      </div>
      <StatusBar />
      <Toast />
      <Brand />
    </div>
  );
}
